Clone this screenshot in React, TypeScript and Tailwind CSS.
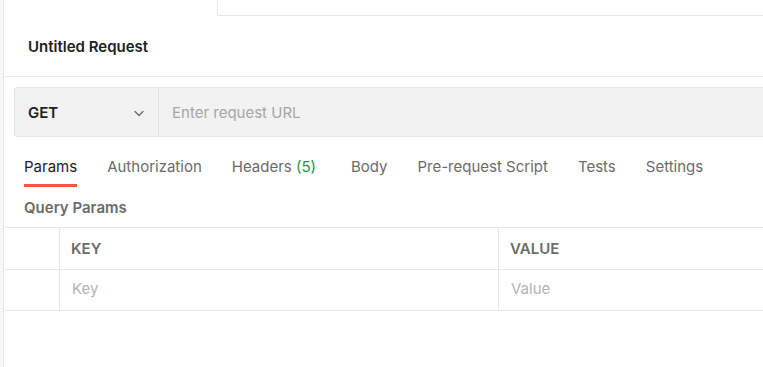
import React from 'react';

const tabs = ['Params', 'Authorization', 'Headers', 'Body', 'Pre-request Script', 'Tests', 'Settings'];

function Chevron() {
  return (
    <svg width="12" height="12" viewBox="0 0 12 12" fill="none" className="text-[#6b6b6b]">
      <path d="M2 4.5L6 8.5L10 4.5" stroke="currentColor" strokeWidth="1.3" strokeLinecap="round" strokeLinejoin="round" />
    </svg>
  );
}

export default function App() {
  return (
    <div className="flex w-[763px] h-[367px] overflow-hidden bg-white font-['Inter','Liberation_Sans',sans-serif] text-[15px] leading-[22px]">
      {/* left edge */}
      <div className="w-[3px] shrink-0 bg-[#f7f7f7] border-r border-[#e8e8e8] box-content" />

      <div className="flex-1 min-w-0 flex flex-col">
        {/* open request tabs */}
        <div className="flex h-4 shrink-0">
          <div className="w-[214px] border-r border-[#e6e6e6] bg-white" />
          <div className="flex-1 border-b border-[#e6e6e6]" />
        </div>

        {/* title */}
        <div className="h-[61px] shrink-0 flex items-center pl-6 pt-[2px] border-b border-[#ebebeb]">
          <h1 className="font-semibold text-[#212121]">Untitled Request</h1>
        </div>

        {/* url bar */}
        <div className="pl-[10px] pt-[10px]">
          <div className="flex h-[50px] bg-[#f2f2f2] border border-r-0 border-[#e6e6e6] rounded-l-[4px]">
            <div className="w-[144px] shrink-0 flex items-center justify-between pl-[13px] pr-[13px] pt-[2px] border-r border-[#e3e3e3]">
              <span className="font-semibold text-[#212121]">GET</span>
              <Chevron />
            </div>
            <div className="flex-1 flex items-center pl-[13px] pt-[1px] text-[#a6a6a6]">Enter request URL</div>
          </div>
        </div>

        {/* request tabs */}
        <div className="flex gap-[30px] pl-5 mt-[18px] h-[32px] shrink-0">
          {tabs.map((t, i) => (
            <div key={t} className={`relative flex items-start pt-[1px] ${i === 0 ? 'text-[#212121]' : 'text-[#6b6b6b]'} ${t === 'Headers' ? 'mr-[5px]' : ''}`}>
              <span>
                {t}
                {t === 'Headers' && <span className="text-[#0f9d48]"> (5)</span>}
              </span>
              {i === 0 && <div className="absolute left-0 right-0 bottom-[0px] h-[3px] bg-[#f05a3a]" />}
            </div>
          ))}
        </div>

        {/* query params */}
        <div className="pl-5 h-[40px] pt-[2px] flex items-center">
          <span className="font-semibold text-[#6b6b6b]">Query Params</span>
        </div>

        <div className="border-t border-[#e6e6e6]">
          <div className="flex h-[42px] border-b border-[#e6e6e6]">
            <div className="w-[56px] shrink-0 border-r border-[#e6e6e6]" />
            <div className="w-[439px] shrink-0 border-r border-[#e6e6e6] flex items-center pl-[11px] font-semibold text-[#6b6b6b]">KEY</div>
            <div className="flex-1 flex items-center pl-[11px] font-semibold text-[#6b6b6b]">VALUE</div>
          </div>
          <div className="flex h-[41px] border-b border-[#e6e6e6]">
            <div className="w-[56px] shrink-0 border-r border-[#e6e6e6]" />
            <div className="w-[439px] shrink-0 border-r border-[#e6e6e6] flex items-center pl-[12px] pb-[2px] text-[#b3b3b3]">Key</div>
            <div className="flex-1 flex items-center pl-[12px] pb-[2px] text-[#b3b3b3]">Value</div>
          </div>
        </div>
      </div>
    </div>
  );
}
